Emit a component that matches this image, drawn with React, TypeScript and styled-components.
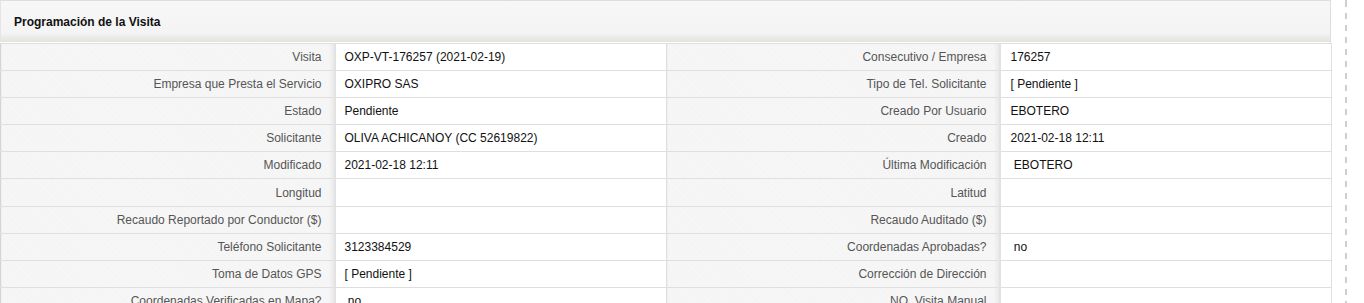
import styled, { createGlobalStyle } from "styled-components";

const GlobalStyle = createGlobalStyle`
  html, body {
    margin: 0;
    padding: 0;
    background: #fff;
    overflow: hidden;
  }
  body {
    font-family: "Liberation Sans", Arial, sans-serif;
    font-size: 12px;
    color: #222;
  }
`;

type Row = [string, string, string, string];

const rows: Row[] = [
  ["Visita", "OXP-VT-176257 (2021-02-19)", "Consecutivo / Empresa", "176257"],
  ["Empresa que Presta el Servicio", "OXIPRO SAS", "Tipo de Tel. Solicitante", "[ Pendiente ]"],
  ["Estado", "Pendiente", "Creado Por Usuario", "EBOTERO"],
  ["Solicitante", "OLIVA ACHICANOY (CC 52619822)", "Creado", "2021-02-18 12:11"],
  ["Modificado", "2021-02-18 12:11", "Última Modificación", "\u00a0EBOTERO"],
  ["Longitud", "", "Latitud", ""],
  ["Recaudo Reportado por Conductor ($)", "", "Recaudo Auditado ($)", ""],
  ["Teléfono Solicitante", "3123384529", "Coordenadas Aprobadas?", "\u00a0no"],
  ["Toma de Datos GPS", "[ Pendiente ]", "Corrección de Dirección", ""],
  ["Coordenadas Verificadas en Mapa?", "\u00a0no", "NO. Visita Manual", ""],
];

export default function App() {
  return (
    <>
      <GlobalStyle />
      <Page>
        <Panel>
          <PanelHeader>Programación de la Visita</PanelHeader>
          <DetailTable>
            <colgroup>
              <col style={{ width: 334 }} />
              <col style={{ width: 332 }} />
              <col style={{ width: 333 }} />
              <col style={{ width: 332 }} />
            </colgroup>
            <tbody>
              {rows.map((r, i) => (
                // the Longitud / Latitud row sits one pixel taller in the original
                <DetailRow key={i} $tall={i === 5}>
                  <LabelCell>{r[0]}</LabelCell>
                  <ValueCell>{r[1]}</ValueCell>
                  <LabelCell>{r[2]}</LabelCell>
                  <ValueCell $wide>{r[3]}</ValueCell>
                </DetailRow>
              ))}
            </tbody>
          </DetailTable>
        </Panel>
        <Rail />
      </Page>
    </>
  );
}

const Page = styled.div`
  display: flex;
  align-items: stretch;
  height: 303px;
`;

const Panel = styled.div`
  width: 1331px;
  flex-shrink: 0;
  box-sizing: border-box;
  border-right: 1px solid #dcdcdc;
`;

const PanelHeader = styled.div`
  height: 42px;
  box-sizing: border-box;
  display: flex;
  align-items: center;
  padding: 1px 13px 0;
  border-top: 1px solid #dedede;
  border-left: 1px solid #e4e4e4;
  background: linear-gradient(
    to bottom,
    #f7f7f7 0%,
    #f4f4f4 78%,
    #ebebe8 88%,
    #e3e3de 100%
  );
  font-weight: bold;
  font-size: 12px;
  color: #111;
`;

const DetailTable = styled.table`
  width: 1331px;
  table-layout: fixed;
  border-collapse: collapse;
  margin-top: 1px;
`;

const DetailRow = styled.tr<{ $tall?: boolean }>`
  td {
    height: ${(p) => (p.$tall ? "27px" : "26px")};
  }
`;

const LabelCell = styled.td`
  padding: 0 12px 0 8px;
  text-align: right;
  color: #555;
  border: 1px solid #dfdfdf;
  border-left-color: #d4d4d4;
  background:
    linear-gradient(to right, rgba(0, 0, 0, 0) calc(100% - 6px), rgba(0, 0, 0, 0.05) 100%),
    repeating-linear-gradient(45deg, #f4f4f4 0 2px, #f6f6f6 2px 4px);
  white-space: nowrap;
  overflow: hidden;
`;

const ValueCell = styled.td<{ $wide?: boolean }>`
  padding: 0 10px 0 ${(p) => (p.$wide ? "10px" : "9px")};
  color: #111;
  background: #fff;
  border: 1px solid #dfdfdf;
  border-left: 2px solid #e2e2e2;
  white-space: nowrap;
  overflow: hidden;
`;

const Rail = styled.div`
  width: 2px;
  margin-left: 14px;
  background: repeating-linear-gradient(to bottom, #cfcfcf 0 6px, transparent 6px 12px);
  background-position: 0 1px;
`;
